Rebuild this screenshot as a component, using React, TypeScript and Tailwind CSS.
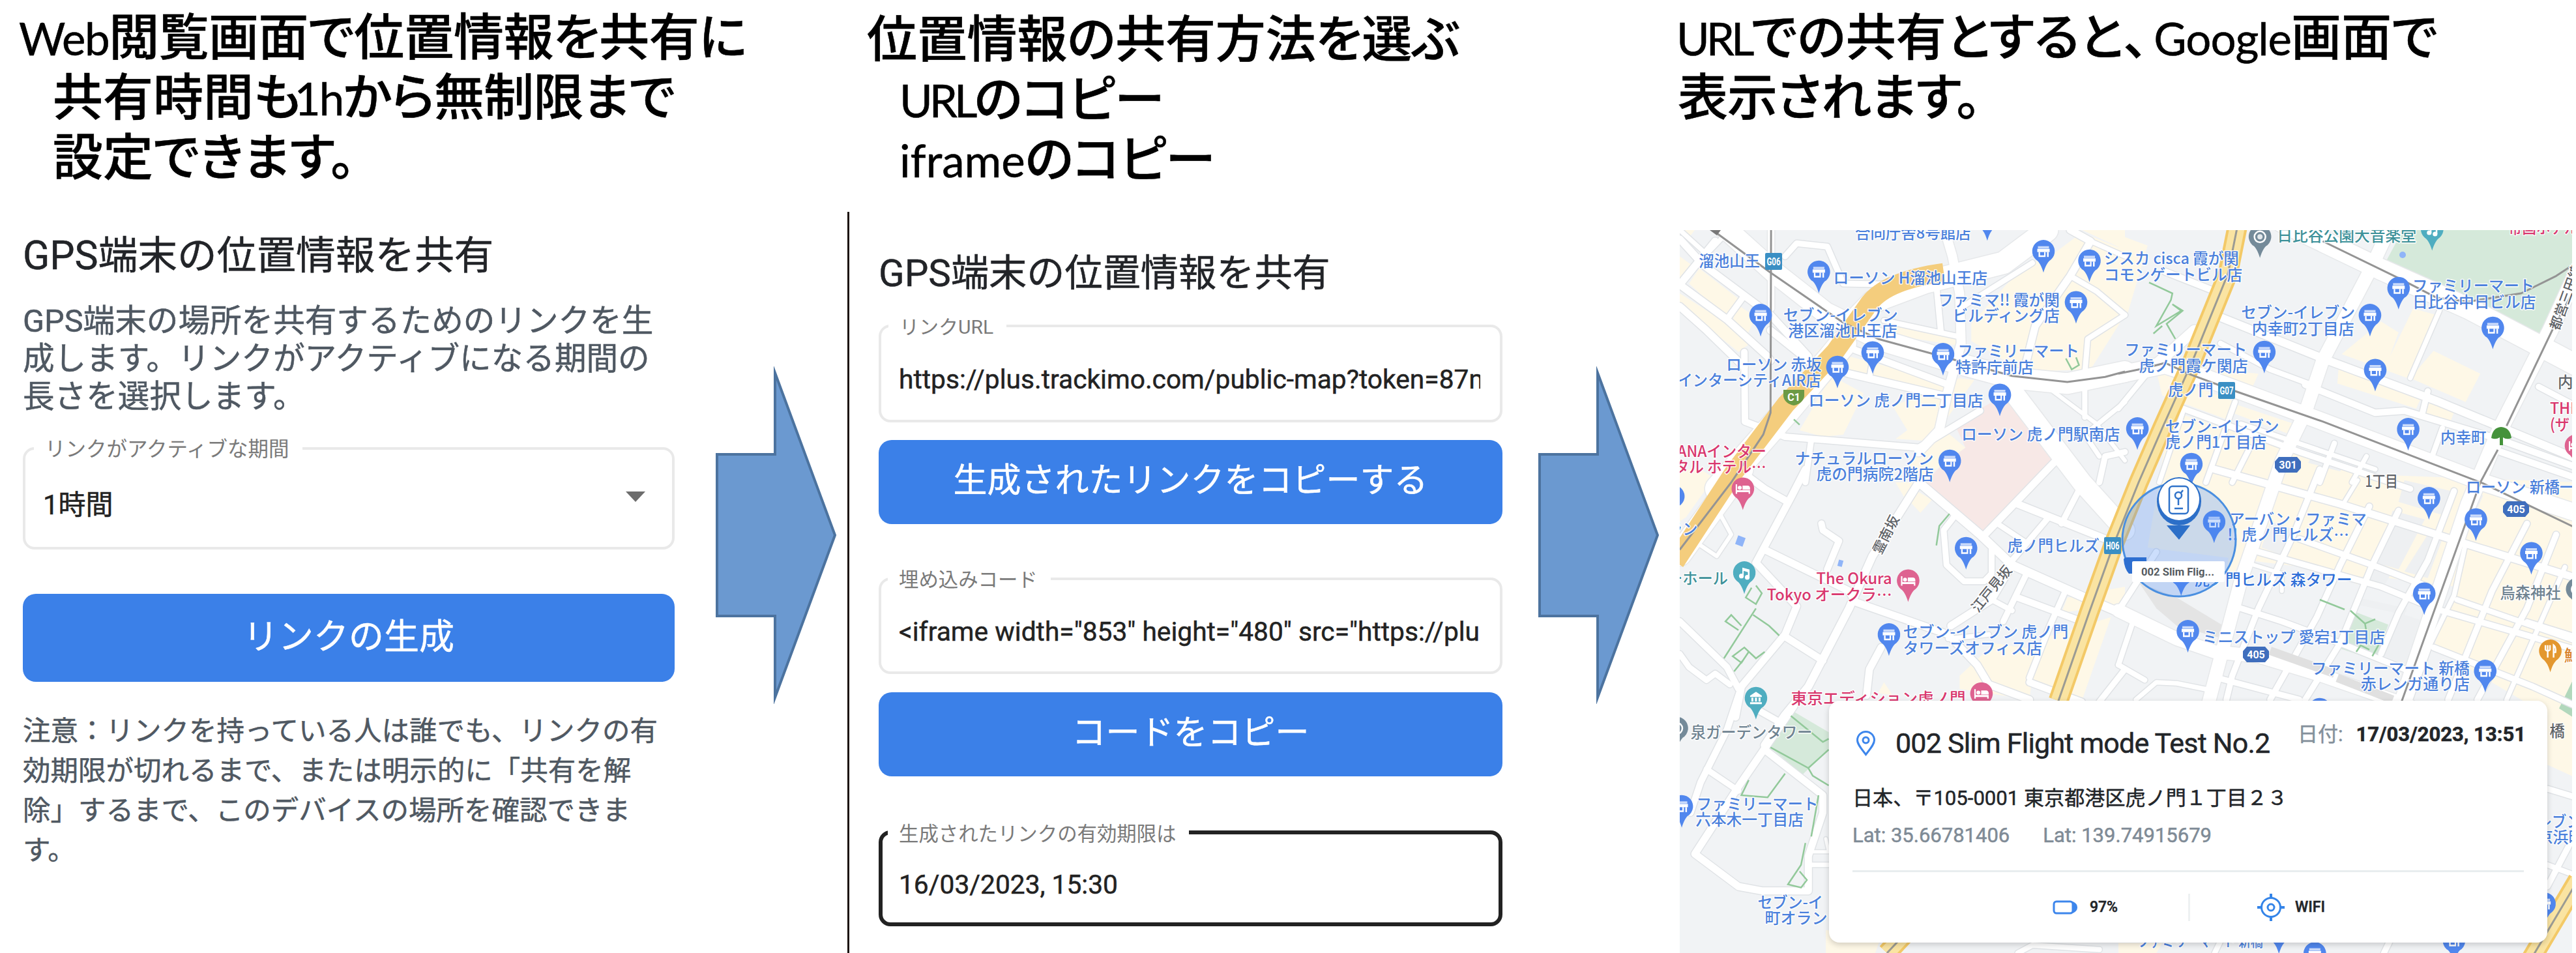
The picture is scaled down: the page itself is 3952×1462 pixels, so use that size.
import type { ReactNode } from "react";

const BLUE = "#4a80dc";
const PINK = "#d9376e";
const TEAL = "#3d9199";
const SLATE = "#6f8391";
const DARK = "#5f6368";

/* ---------- slide text ---------- */

const Latin = ({ children, className = "" }: { children: ReactNode; className?: string }) => (
  <span className={`font-['Lato'] text-[69px] font-normal leading-none ${className}`}>{children}</span>
);

const Line = ({ children, className = "" }: { children: ReactNode; className?: string }) => (
  <div className={`h-[92px] leading-[92px] ${className}`}>{children}</div>
);

const Caption = ({ children, className = "" }: { children: ReactNode; className?: string }) => (
  <h2
    className={`whitespace-nowrap font-['Noto_Sans_CJK_JP',sans-serif] text-[77px] font-medium text-black [font-feature-settings:'palt'] ${className}`}
  >
    {children}
  </h2>
);

const Arrow = () => (
  <svg className="mt-[562px] h-[518px] w-[186px] shrink-0" viewBox="0 0 186 518">
    <path
      d="M2 135H91V10L183 259L91 508V383H2Z"
      fill="#6b99d0"
      stroke="#4c739f"
      strokeWidth="4"
      strokeMiterlimit="10"
    />
  </svg>
);

/* ---------- form pieces ---------- */

const Field = ({
  label,
  className = "",
  labelClass = "",
  children,
}: {
  label: string;
  className?: string;
  labelClass?: string;
  children: ReactNode;
}) => (
  <div className={`relative flex items-center rounded-[18px] pl-[27px] pr-[30px] pt-[20px] ${className}`}>
    <span
      className={`absolute top-[-22px] whitespace-nowrap bg-white pl-[17px] pr-[20px] leading-[44px] text-[#7a7a7a] [-webkit-text-stroke:0px] ${labelClass}`}
    >
      {label}
    </span>
    {children}
  </div>
);

const Button = ({ children, className = "" }: { children: ReactNode; className?: string }) => (
  <button
    className={`flex w-full items-center justify-center rounded-[20px] bg-[#3b80e8] text-white ${className}`}
  >
    {children}
  </button>
);

/* ---------- map ---------- */

type Tile = { ox: number; oy: number; sx: number };
const A: Tile = { ox: 2560, oy: 340, sx: 2.24 };
const B: Tile = { ox: 3250, oy: 340, sx: 2.2336 };
const C: Tile = { ox: 2560, oy: 720, sx: 2.24 };
const D: Tile = { ox: 3250, oy: 720, sx: 2.2336 };
const E: Tile = { ox: 2560, oy: 1060, sx: 2.24 };
const F: Tile = { ox: 3250, oy: 1060, sx: 2.2336 };

const px = (t: Tile, x: number) => t.ox + x / t.sx;
const py = (t: Tile, y: number) => t.oy + y / 3;

// "x,y x,y" in tile units -> the same list in map units
const pts = (t: Tile, s: string) =>
  s
    .split(" ")
    .map((p) => {
      const [x, y] = p.split(",").map(Number);
      return `${px(t, x).toFixed(1)},${py(t, y).toFixed(1)}`;
    })
    .join(" ");

const shops: [Tile, string][] = [
  [A, "38,160 100,220 60,285 38,260"],
  [A, "105,215 245,360 200,445 70,285"],
  [A, "38,330 120,400 295,545 240,600 38,385"],
  [A, "240,385 300,440 270,520 215,470"],
  [A, "38,38 90,38 60,90 38,80"],
  [A, "800,460 990,520 990,570 760,520"],
  [A, "1040,470 1160,290 1240,190 1300,170 1420,50 1568,130 1568,430 1450,680 1220,690 1040,550"],
  [A, "450,960 560,710 670,790 600,980 530,990"],
  [A, "770,850 860,800 1000,720 1050,730 900,1010 780,1000 820,960"],
  [A, "620,620 960,740 940,830 600,690"],
  [A, "940,950 1020,1040 860,1200 820,1130"],
  [A, "1420,38 1568,38 1568,130"],
  [A, "520,590 540,560 490,620"],
  [B, "0,60 100,110 30,430 0,430"],
  [B, "900,460 960,510 930,620 1010,400 1090,430 990,720 765,610"],
  [B, "755,670 1045,790 1020,860 750,745"],
  [B, "1080,595 1240,700 1190,830 1000,720"],
  [B, "1070,815 1155,860 1135,930 1050,890"],
  [B, "130,690 400,830 370,910 150,800"],
  [B, "330,680 480,700 460,760 340,720"],
  [B, "400,840 600,930 590,980 390,880"],
  [B, "180,870 600,1060 1568,1500 1568,1750 100,1500"],
  [C, "38,0 110,0 155,40 60,220 38,240"],
  [C, "840,90 905,140 865,200 830,150"],
  [C, "780,60 850,60 810,130"],
  [C, "1000,950 1120,800 1260,830 1240,1060 1000,1010"],
  [C, "1280,780 1520,680 1420,1065 1250,970"],
  [C, "1370,590 1568,540 1568,620 1350,660"],
  [C, "740,980 770,1040 720,1030"],
  [D, "400,0 1568,60 1568,500 1130,330 620,320 480,380"],
  [D, "1200,340 1568,450 1568,1140 1480,1140 1080,820"],
  [D, "480,410 850,470 820,530 660,440"],
  [D, "380,380 430,380 400,470 370,470"],
  [E, "540,1100 730,1130 710,1206 540,1206"],
  [F, "1470,0 1568,40 1568,400 1470,340"],
  [F, "0,1160 150,1160 130,1206 0,1206"],
];

const grayBlocks: [Tile, string][] = [
  [D, "940,190 1050,230 960,460 880,430"],
  [D, "980,50 1140,100 1110,210 960,150"],
  [D, "520,240 610,280 570,400 490,360"],
  [D, "860,450 930,490 900,560 830,530"],
  [D, "1060,300 1110,320 1060,500 980,470"],
  [D, "960,660 1050,700 990,900 890,850"],
  [D, "820,590 990,640 980,670 810,620"],
  [B, "670,1060 780,1080 760,1150 650,1110"],
  [D, "1190,100 1250,120 1230,180 1180,160"],
];

const minor: [Tile, string, number][] = [
  [A, "38,80 120,200 350,430 480,620", 11],
  [A, "38,290 200,450 340,620 350,640", 11],
  [A, "38,390 130,500 260,670", 11],
  [A, "160,90 38,290", 11],
  [A, "255,350 200,450", 9],
  [A, "38,38 130,150 210,38", 7],
  [A, "400,160 440,100 545,115 600,285 800,290", 9],
  [A, "350,500 480,640 620,700 940,800", 11],
  [A, "640,590 960,750", 10],
  [A, "700,640 690,720", 8],
  [A, "740,455 1000,530", 8],
  [A, "260,600 262,920 400,990 860,1040 1070,870", 10],
  [A, "490,1000 480,1100 470,1200", 9],
  [A, "920,290 935,500", 9],
  [A, "1380,250 1470,320 1568,430", 8],
  [A, "1250,190 1000,400", 8],
  [A, "1380,38 1450,90 1380,250 1260,480 1230,640 1210,720", 11],
  [A, "1568,430 1440,540 1430,700 1430,900", 8],
  [A, "1450,90 1568,160", 7],
  [A, "1280,740 1470,930 1568,1100", 6],
  [A, "1568,830 1430,980 1480,1080", 7],
  [A, "1568,1060 1500,1080 1480,1200", 9],
  [B, "350,440 720,640 1100,830 1568,1090", 12],
  [B, "640,750 880,880 980,870 1300,1000 1568,1130", 10],
  [B, "350,560 520,680 680,760", 8],
  [B, "200,850 620,1060 1000,1230", 9],
  [B, "160,230 330,320", 10],
  [B, "110,680 0,860", 8],
  [B, "1060,780 1040,890", 9],
  [B, "1100,410 1000,720", 7],
  [B, "1110,950 1070,1100", 8],
  [B, "1440,760 1568,850", 9],
  [B, "1310,1060 1568,1180", 10],
  [B, "400,830 300,1200", 8],
  [B, "220,880 140,1200", 7],
  [B, "450,1040 390,1200", 8],
  [B, "740,1020 690,1200", 8],
  [B, "850,1080 800,1200", 7],
  [B, "420,930 880,1140", 7],
  [C, "860,60 700,400 620,640 480,1000 400,1130 330,1270", 12],
  [C, "470,0 420,130 300,430", 11],
  [C, "280,40 330,90 410,150", 11],
  [C, "170,190 215,300 165,400 110,350", 6],
  [C, "860,60 1070,300 1180,440 1430,590 1568,670", 13],
  [C, "330,370 620,560 640,610 960,760 1060,900 1100,990 1240,1060", 11],
  [C, "525,250 530,280 585,330 545,460", 10],
  [C, "300,430 440,630 400,760 250,1000 230,1140", 11],
  [C, "38,700 200,910 240,1010", 10],
  [C, "38,850 70,910 130,970 160,940 210,990", 9],
  [C, "400,770 530,880", 11],
  [C, "730,820 690,920 680,1040", 11],
  [C, "970,720 1110,600 1180,440", 11],
  [C, "980,220 945,280 955,440 1015,515 1085,515 1110,480 1110,370", 9],
  [C, "1080,310 1345,-60", 11],
  [C, "1200,160 1500,320", 11],
  [C, "1130,250 1220,330", 8],
  [C, "1300,230 1180,420", 9],
  [C, "1230,480 1150,700", 9],
  [C, "1200,590 1420,700", 10],
  [C, "1110,600 1180,650", 8],
  [C, "1360,570 1310,720 1240,960", 9],
  [C, "1240,980 1420,1070", 10],
  [C, "1420,70 1350,250", 9],
  [C, "1568,920 1480,1070", 9],
  [C, "960,780 1100,760", 7],
  [D, "330,0 760,160 1160,330 1568,500", 11],
  [D, "480,380 900,540 1080,640 1568,830", 9],
  [D, "620,320 870,440 1060,540", 9],
  [D, "420,640 560,700 760,800 1000,930", 9],
  [D, "1160,600 1568,790", 8],
  [D, "1080,820 1420,1000 1568,1090", 9],
  [D, "1400,700 1568,770", 7],
  [D, "690,0 600,300 480,640 390,950 370,1060", 9],
  [D, "860,170 760,440 680,680 520,1060", 9],
  [D, "960,190 870,440 760,800 640,1060", 9],
  [D, "1150,100 1060,420 960,660 900,850", 9],
  [D, "1190,340 1150,580 1070,800 1000,1060", 7],
  [D, "1400,250 1280,560 1130,1060", 9],
  [D, "1500,300 1400,640 1230,1060", 9],
  [D, "1530,450 1330,1060", 7],
  [D, "820,50 770,160", 6],
  [D, "440,430 560,480 560,560", 6],
  [D, "50,700 0,900", 8],
  [D, "0,900 90,970", 8],
  [D, "340,960 620,1060", 9],
  [D, "60,1060 130,980 200,985 330,1020", 7],
  [D, "130,380 0,650", 9],
  [E, "245,0 200,180 110,420 75,560", 10],
  [E, "430,70 240,440 90,750 240,900 320,920 480,920 480,760 530,560 530,480 330,270", 11],
  [E, "130,360 240,460", 9],
  [E, "310,90 390,150", 10],
  [E, "480,800 550,800", 7],
  [E, "480,740 550,740 540,680", 5],
  [E, "1200,1206 1250,1170 1480,1190", 8],
  [F, "1470,450 1568,490", 9],
  [F, "1568,650 1470,900", 9],
  [F, "1470,800 1568,850", 8],
  [F, "350,1150 330,1206", 8],
  [F, "930,1150 910,1206", 9],
];

const major: [Tile, string, number][] = [
  [A, "170,0 360,230 540,420 740,550 960,640 1180,720 1370,745 1568,690", 32],
  [A, "620,480 700,370 880,280 1150,190 1300,40", 34],
  [A, "940,0 975,160 1000,330 1005,560 960,780 930,960 860,1060", 14],
  [A, "170,1230 400,880 600,560", 40],
  [A, "1170,760 1420,1200 1568,1420", 30],
  [A, "352,38 352,400", 10],
  [B, "560,0 900,220 1200,400 1568,660", 32],
  [B, "940,0 860,230 700,640 640,880 560,1100 420,1650 300,2260", 20],
  [B, "1568,240 1480,500 1310,950 1200,1300 960,2260", 24],
  [B, "0,705 160,660 300,720 700,920 1250,1200 1568,1340", 26],
  [B, "110,680 260,500", 16],
  [D, "0,650 200,780 330,840 480,860 700,950 1000,1090", 20],
  [C, "250,0 38,390", 36],
];

const rails: [Tile, string][] = [
  [A, "352,38 350,880 325,980 270,1090 215,1200 38,1510"],
  [A, "150,38 350,235 600,465 720,540 940,620 1180,710 1370,738 1500,715 1568,690"],
  [B, "0,700 90,675 160,650 240,700 400,780 700,920 1250,1205 1568,1410"],
  [B, "700,90 960,260 1090,350 1200,368 1380,330 1500,250 1568,190"],
  [B, "1555,330 1490,490 1330,940"],
  [B, "1300,1050 1240,1200 970,2210"],
];

const greens: [Tile, string][] = [
  [B, "105,280 185,330 180,360 130,480 215,410 185,380 220,410 165,470 195,540"],
  [B, "120,515 150,480"],
  [C, "300,535 320,570 300,620 265,590 285,545"],
  [C, "300,640 190,870"],
  [C, "240,740 195,700 215,670 250,720"],
  [C, "290,670 345,720 380,765"],
  [C, "330,840 300,870 260,820 220,860 250,890 275,840"],
  [C, "255,880 225,930"],
  [C, "965,205 930,260 920,350"],
  [D, "690,600 775,645"],
  [D, "795,650 845,710 850,750"],
  [D, "845,710 880,690"],
  [D, "815,840 830,810 860,830"],
  [D, "870,860 895,800"],
  [E, "420,115 530,235 550,220"],
  [E, "350,260 480,355 550,270"],
  [E, "480,355 495,390 550,435"],
  [E, "400,380 340,490 250,480 275,410"],
  [E, "515,480 490,670"],
  [E, "470,700 455,800 410,890 455,905 475,870 450,830"],
  [A, "1365,630 1385,680 1410,660 1400,625"],
  [A, "430,910 450,935"],
];

// tile, left, right, middle, text, colour
const labels: [Tile, number, number, number, string, string][] = [
  [A, 108, 318, 180, "溜池山王", BLUE],
  [A, 645, 1043, 52, "合同庁舎8号館店", BLUE],
  [A, 570, 1100, 258, "ローソン H溜池山王店", BLUE],
  [A, 930, 1348, 360, "ファミマ!! 霞が関", BLUE],
  [A, 980, 1348, 432, "ビルディング店", BLUE],
  [A, 398, 792, 428, "セブン-イレブン", BLUE],
  [A, 415, 790, 502, "港区溜池山王店", BLUE],
  [A, 202, 530, 658, "ローソン 赤坂", BLUE],
  [A, 35, 528, 728, "インターシティAIR店", BLUE],
  [A, 998, 1415, 595, "ファミリーマート", BLUE],
  [A, 990, 1258, 670, "特許庁前店", BLUE],
  [A, 485, 1085, 822, "ローソン 虎ノ門二丁目店", BLUE],
  [A, 1010, 1555, 978, "ローソン 虎ノ門駅南店", BLUE],
  [A, 438, 915, 1090, "ナチュラルローソン", BLUE],
  [A, 512, 915, 1162, "虎の門病院2階店", BLUE],
  [A, 1500, 1964, 168, "シスカ cisca 霞が関", BLUE],
  [A, 1500, 1976, 242, "コモンゲートビル店", BLUE],
  [A, 34, 340, 1055, "ANAインター", PINK],
  [A, 24, 340, 1128, "タル ホテル…", PINK],
  [B, 548, 1025, 62, "日比谷公園大音楽堂", TEAL],
  [B, 425, 815, 418, "セブン-イレブン", BLUE],
  [B, 462, 812, 492, "内幸町2丁目店", BLUE],
  [B, 1012, 1430, 295, "ファミリーマート", BLUE],
  [B, 1012, 1435, 368, "日比谷中日ビル店", BLUE],
  [B, 25, 445, 588, "ファミリーマート", BLUE],
  [B, 75, 448, 662, "虎ノ門霞ケ関店", BLUE],
  [B, 175, 330, 775, "虎ノ門", BLUE],
  [B, 165, 555, 942, "セブン-イレブン", BLUE],
  [B, 165, 512, 1015, "虎ノ門1丁目店", BLUE],
  [B, 1108, 1265, 992, "内幸町", BLUE],
  [B, 1510, 1615, 738, "内幸", DARK],
  [B, 1483, 1584, 858, "THE", PINK],
  [B, 1483, 1600, 932, "(ザ・", PINK],
  [B, 1340, 1580, 28, "帝国ホテル", PINK],
  [C, 1168, 1485, 350, "虎ノ門ヒルズ", BLUE],
  [C, 810, 1378, 748, "セブン-イレブン 虎ノ門", BLUE],
  [C, 810, 1288, 822, "タワーズオフィス店", BLUE],
  [C, 512, 772, 500, "The Okura", PINK],
  [C, 342, 772, 575, "Tokyo オークラ…", PINK],
  [C, 0, 208, 500, "ーホール", TEAL],
  [C, 425, 1025, 1052, "東京エディション虎ノ門", PINK],
  [C, 0, 104, 272, "ラン", BLUE],
  [D, 850, 962, 55, "1丁目", DARK],
  [D, 1195, 1568, 80, "ローソン 新橋一", BLUE],
  [D, 385, 855, 228, "アーバン・ファミマ", BLUE],
  [D, 378, 795, 300, "!! 虎ノ門ヒルズ…", BLUE],
  [D, 265, 805, 508, "虎ノ門ヒルズ 森タワー", "#2f6fd8"],
  [D, 292, 918, 770, "ミニストップ 愛宕1丁目店", BLUE],
  [D, 665, 1208, 915, "ファミリーマート 新橋", BLUE],
  [D, 835, 1208, 988, "赤レンガ通り店", BLUE],
  [D, 1312, 1520, 568, "烏森神社", SLATE],
  [D, 1532, 1586, 855, "鮨", "#d9822b"],
  [E, 80, 498, 190, "泉ガーデンタワー", SLATE],
  [E, 100, 518, 520, "ファミリーマート", BLUE],
  [E, 97, 468, 592, "六本木一丁目店", BLUE],
  [E, 310, 535, 972, "セブン-イ", BLUE],
  [E, 335, 550, 1045, "町オラン", BLUE],
  [F, 1482, 1534, 183, "橋", DARK],
  [F, 1440, 1590, 600, "レブン", BLUE],
  [F, 1440, 1600, 672, "京浜町", BLUE],
  [F, 70, 500, 1150, "ファミリーマート 新橋", BLUE],
];

type Kind = "shop" | "hotel" | "music" | "museum" | "dot" | "food";
const pinColor: Record<Kind, string> = {
  shop: "#5187ee",
  hotel: "#de6390",
  music: "#4fadc0",
  museum: "#4fadc0",
  dot: "#748a99",
  food: "#e3972f",
};

const pins: [Tile, number, number, Kind][] = [
  [A, 1095, -10, "shop"],
  [A, 516, 232, "shop"],
  [A, 1288, 137, "shop"],
  [A, 1446, 181, "shop"],
  [A, 1400, 372, "shop"],
  [A, 316, 431, "shop"],
  [A, 701, 603, "shop"],
  [A, 943, 611, "shop"],
  [A, 580, 670, "shop"],
  [A, 1138, 798, "shop"],
  [A, 966, 1102, "shop"],
  [B, 960, 307, "shop"],
  [B, 862, 431, "shop"],
  [B, 500, 601, "shop"],
  [B, 880, 684, "shop"],
  [B, 1283, 490, "shop"],
  [B, 993, 956, "shop"],
  [B, 65, 953, "shop"],
  [B, 250, 1117, "shop"],
  [B, 485, 70, "dot"],
  [B, 1075, 36, "music"],
  [B, 1568, 1032, "hotel"],
  [C, 255, 90, "hotel"],
  [C, 16, 125, "shop"],
  [C, 260, 476, "music"],
  [C, 1022, 364, "shop"],
  [C, 823, 513, "hotel"],
  [C, 757, 761, "shop"],
  [C, 1075, 1033, "hotel"],
  [C, 300, 1054, "museum"],
  [D, 1064, 134, "shop"],
  [D, 1225, 232, "shop"],
  [D, 1415, 387, "shop"],
  [D, 1048, 573, "shop"],
  [D, 238, 746, "shop"],
  [D, 1257, 929, "shop"],
  [D, 328, 242, "shop"],
  [D, 215, 485, "shop"],
  [D, 690, 1105, "shop"],
  [D, 1480, 836, "food"],
  [D, 1572, 552, "dot"],
  [E, 28, 172, "dot"],
  [E, 45, 532, "shop"],
  [F, 1460, 980, "shop"],
  [F, 550, 1112, "shop"],
  [F, 673, 1208, "shop"],
  [F, 1150, 1150, "shop"],
];

const Pin = ({ x, y, kind }: { x: number; y: number; kind: Kind }) => (
  <g transform={`translate(${x} ${y})`}>
    <path
      d="M0 32.500C-2 26-4 20-9 14.500A17.300 17.300 0 1 1 9 14.500C4 20 2 26 0 32.500Z"
      fill={pinColor[kind]}
    />
    {kind === "shop" && (
      <g fill="#fff">
        <path d="M-8.500 -8H8.500V-4.500H-8.500Z" opacity=".7" />
        <path d="M-9.500 -4H9.500V1H-9.500Z" />
        <path d="M-7.500 1H-5.200V6H1V1H3.200V8.500H-7.500Z" />
        <path d="M5.500 1H8V8.500H5.500Z" />
      </g>
    )}
    {kind === "hotel" && (
      <g fill="#fff">
        <path d="M-11 -7H-8.800V2H11V7.500H8.800V5H-8.800V7.500H-11Z" />
        <circle cx="-4.800" cy="-1.800" r="3" />
        <path d="M-.5 -5H7A4 4 0 0 1 11 -1V1.200H-.5Z" />
      </g>
    )}
    {kind === "music" && (
      <g fill="#fff">
        <circle cx="-4.500" cy="5" r="3.600" />
        <circle cx="4.500" cy="7" r="3.600" />
        <path d="M-3 -8L8 -5V7H5.500V-1L-1 -3V5H-3Z" />
      </g>
    )}
    {kind === "museum" && (
      <g fill="#fff">
        <path d="M0 -10L9 -4V-2H-9V-4Z" />
        <path d="M-7 -1H-4V5H-7ZM-1.500 -1H1.500V5H-1.500ZM4 -1H7V5H4ZM-9 6H9V9H-9Z" />
      </g>
    )}
    {kind === "dot" && (
      <g>
        <circle r="8.500" fill="none" stroke="#fff" strokeWidth="2.500" />
        <circle r="4" fill="#fff" opacity=".8" />
      </g>
    )}
    {kind === "food" && (
      <g fill="none" stroke="#fff" strokeWidth="2.400">
        <path d="M-4 10V-9M-7.500 -9V-2Q-4 2 -.5 -2V-9M5 10V-9Q9 -6 8 2H5" />
      </g>
    )}
  </g>
);

const Metro = ({ x, y, text }: { x: number; y: number; text: string }) => (
  <g transform={`translate(${x} ${y})`}>
    <rect x="-13" y="-13" width="26" height="26" rx="2" fill="#3a8fc4" />
    <text y="6" textAnchor="middle" fill="#fff" className="font-['Roboto'] text-[16px] font-bold" textLength="21" lengthAdjust="spacingAndGlyphs">
      {text}
    </text>
  </g>
);

const Route = ({ x, y, text }: { x: number; y: number; text: string }) => (
  <g transform={`translate(${x} ${y})`}>
    <path d="M-14 -12H14L20 -5V5L14 12H-14L-20 5V-5Z" fill="#3f6ebd" />
    <text y="6" textAnchor="middle" fill="#fff" className="font-['Roboto'] text-[16px] font-bold">
      {text}
    </text>
  </g>
);

const RoadName = ({ x, y, turn, text }: { x: number; y: number; turn: number; text: string }) => (
  <text
    transform={`translate(${x} ${y}) rotate(${turn})`}
    y="8"
    textAnchor="middle"
    fill={DARK}
    stroke="#fff"
    strokeWidth="3"
    paintOrder="stroke"
    className="font-['Noto_Sans_CJK_JP',sans-serif] text-[21px] font-medium"
  >
    {text}
  </text>
);

const Lines = ({ data, stroke, extra = 0 }: { data: [Tile, string, number][]; stroke: string; extra?: number }) => (
  <g fill="none" stroke={stroke} strokeLinejoin="round" strokeLinecap="round">
    {data.map(([t, s, w], i) => (
      <polyline key={i} points={pts(t, s)} strokeWidth={w + extra} />
    ))}
  </g>
);

const trunk = "M3434 340L3418 420L3364 553L3318 655L3281 740L3242 837L3205 940L3158 1075";

const MapCanvas = () => (
  <svg className="block h-[1109px] w-[1369px] bg-[#f1f3f5]" viewBox="2577 353 1369 1109">
    <g fill="#fef8e7">
      {shops.map(([t, s], i) => (
        <polygon key={i} points={pts(t, s)} />
      ))}
    </g>
    <g fill="#eef0f2">
      {grayBlocks.map(([t, s], i) => (
        <polygon key={i} points={pts(t, s)} />
      ))}
    </g>
    <polygon
      fill="#f7e8e6"
      points={pts(A, "1060,870 1150,800 1240,930 1345,1080 1078,1440 880,1200 940,1120 1020,1040 985,940")}
    />
    <g fill="#d5e9da">
      <polygon points={pts(B, "918,180 975,38 1568,38 1568,210 1430,545 1250,425")} />
      <polygon points={pts(E, "430,95 550,190 550,270 460,385 345,255")} />
      <polygon points={pts(D, "800,650 925,715 880,880 750,820")} />
      <polygon points={pts(D, "1568,940 1568,1150 1510,1100")} fill="#b2d8bc" />
    </g>
    <polygon fill="#e4e4e4" points={pts(D, "70,520 200,590 360,720 360,780 200,720 130,640")} />

    <Lines data={minor} stroke="#e0e3e6" extra={3} />
    <Lines data={major} stroke="#e6e8ea" extra={3} />
    <Lines data={minor} stroke="#fff" />
    <Lines data={major} stroke="#fff" />
    <g stroke="#e0e0e0" fill="none" strokeWidth="13">
      <polyline points={pts(D, "520,835 740,940")} />
      <polyline points={pts(D, "750,960 940,1060")} />
    </g>

    {/* expressway and trunk road */}
    <g fill="none">
      <path d="M2570 862L2660 725L2740 620L2815 540L2868 465Q2895 430 2982 418" stroke="#f4cd7d" strokeWidth="29" />
      <path d={trunk} stroke="#f3c967" strokeWidth="31" />
      <path d={trunk} stroke="#fae4a2" strokeWidth="23" />
      <path d="M2895 1462L2925 1430M3872 1490L3955 1350" stroke="#f3c967" strokeWidth="31" />
      <path d="M2895 1462L2925 1430M3872 1490L3955 1350" stroke="#fae4a2" strokeWidth="23" />
      <path d={trunk} stroke="#9b9b93" strokeWidth="3" />
      <path d="M2895 1462L2925 1430M3872 1490L3955 1350" stroke="#9b9b93" strokeWidth="3" />
    </g>
    <g fill="none" stroke="#949494" strokeWidth="3" strokeLinejoin="round">
      {rails.map(([t, s], i) => (
        <polyline key={i} points={pts(t, s)} />
      ))}
    </g>
    <path d="M2623 353H2640L2634 361Z" fill="#777" />
    <g fill="none" stroke="#92c99a" strokeWidth="2.500">
      {greens.map(([t, s], i) => (
        <polyline key={i} points={pts(t, s)} />
      ))}
    </g>
    <g fill="#8fb4f8">
      <rect x="2664" y="823" width="12" height="14" transform="rotate(20 2670 830)" />
      <rect x="2820" y="859" width="7" height="10" transform="rotate(15 2823 864)" />
      <circle cx="3686" cy="391" r="5" />
    </g>

    <g
      stroke="#fff"
      strokeWidth="3"
      strokeLinejoin="round"
      strokeOpacity=".85"
      paintOrder="stroke"
      className="font-['Noto_Sans_CJK_JP',sans-serif] text-[24px] font-medium"
    >
      {labels.map(([t, l, r, mid, text, fill], i) => (
        <text
          key={i}
          x={px(t, l) - 2}
          y={py(t, mid) + 9}
          fill={fill}
          textLength={(r - l) / t.sx}
          lengthAdjust="spacingAndGlyphs"
        >
          {text}
        </text>
      ))}
    </g>
    <RoadName x={2893} y={820} turn={-63} text="霊南坂" />
    <RoadName x={3055} y={903} turn={-51} text="江戸見坂" />
    <RoadName x={3936} y={456} turn={-70} text="都営三田線" />

    {pins.map(([t, x, y, kind], i) => (
      <Pin key={i} x={px(t, x)} y={py(t, y)} kind={kind} />
    ))}
    <Metro x={2721} y={401} text="G06" />
    <Metro x={3416} y={599} text="G07" />
    <Metro x={3241} y={837} text="H06" />
    <Route x={3510} y={713} text="301" />
    <Route x={3860} y={781} text="405" />
    <Route x={3461} y={1004} text="405" />
    <path d="M2736 598H2768V608Q2766 619 2752 622Q2738 619 2736 608Z" fill="#6b9a45" />
    <text x="2752" y="615" textAnchor="middle" fill="#fff" className="font-['Roboto'] text-[16px] font-bold">
      C1
    </text>
    <path d="M3822 672Q3824 656 3837 655Q3851 656 3853 672Q3845 675 3840 671V683H3835V671Q3829 675 3822 672Z" fill="#45923b" />

    {/* device position */}
    <circle cx="3343" cy="828" r="87" fill="#4285f4" fillOpacity=".27" stroke="#4a8fe0" strokeWidth="3" />
    <path d="M3258 858Q3259 855 3264 855H3293V862H3272V880H3266Q3259 872 3258 858Z" fill="#2e6fd0" />
    <path d="M3324 806H3360L3343 828Z" fill="#2c6fc8" />
    <ellipse cx="3343" cy="769" rx="34" ry="37" fill="#2c6fc8" />
    <ellipse cx="3343" cy="766" rx="31" ry="32" fill="#fff" />
    <g fill="none" stroke="#2f72c9" strokeWidth="2.500">
      <rect x="3328" y="746" width="29" height="42" rx="5" />
      <circle cx="3342" cy="760" r="5" />
      <path d="M3342 765V775M3346 756L3349 752M3336 780H3349" />
    </g>
    <rect x="3271" y="861" width="142" height="32" rx="2" fill="#fff" />
    <text x="3285" y="883" textLength="112" lengthAdjust="spacingAndGlyphs" fill="#555b60" className="font-['Roboto'] text-[17px] font-bold">
      002 Slim Flig...
    </text>
  </svg>
);

const InfoCard = () => (
  <div className="absolute left-[229px] top-[722px] h-[371px] w-[1102px] rounded-[16px] bg-white px-[36px] text-[#222529] shadow-[0_3px_10px_rgba(0,0,0,0.18)]">
    <div className="flex h-[112px] items-start">
      <svg className="ml-[5px] mt-[46px] h-[39px] w-[31px] shrink-0" viewBox="0 0 31 39" fill="none" stroke="#3d86ec" strokeWidth="3">
        <path d="M15.500 36.500C9 28 2.500 21 2.500 14.500A13 13 0 0 1 28.500 14.500C28.500 21 22 28 15.500 36.500Z" />
        <circle cx="15.500" cy="14.500" r="4.500" />
      </svg>
      <span className="ml-[30px] mt-[39px] whitespace-nowrap text-[43px] leading-[52px] tracking-[-0.8px]">002 Slim Flight mode Test No.2</span>
      <span className="ml-auto mt-[32px] whitespace-nowrap text-[31px] leading-[40px] text-[#84909b]">日付:</span>
      <span className="ml-[20px] mr-[-3px] mt-[32px] whitespace-nowrap text-[31px] font-bold leading-[40px]">17/03/2023, 13:51</span>
    </div>
    <div className="pt-[18px] text-[31.100px] leading-[40px]">日本、〒105-0001 東京都港区虎ノ門１丁目２３</div>
    <div className="mt-[17px] flex gap-[51px] text-[31px] leading-[40px] text-[#7f8b96]">
      <span>Lat: 35.66781406</span>
      <span>Lat: 139.74915679</span>
    </div>
    <div className="mt-[33px] h-[3px] w-full bg-[#e8edef]" />
    <div className="flex h-[108px] items-center text-[23px] font-medium">
      <div className="flex w-[515px] items-center justify-end pr-[108px]">
        <svg className="mr-[18px] h-[22px] w-[39px]" viewBox="0 0 39 22">
          <rect x="2" y="2" width="29" height="18" rx="4" fill="none" stroke="#3d86ec" strokeWidth="3" />
          <path d="M31 2Q38 5 38 11Q38 17 31 20Z" fill="#3d86ec" />
        </svg>
        97%
      </div>
      <div className="h-[42px] w-[3px] bg-[#eef1f2]" />
      <svg className="ml-[103px] mr-[16px] h-[42px] w-[42px]" viewBox="0 0 42 42" fill="none" stroke="#3484e8" strokeWidth="3">
        <circle cx="21" cy="21" r="14.500" />
        <circle cx="21" cy="21" r="5" />
        <path d="M21 0V8M21 34V42M0 21H8M34 21H42" strokeWidth="4" />
      </svg>
      WIFI
    </div>
  </div>
);

/* ---------- page ---------- */

const App = () => {
  return (
    <div className="flex h-[1462px] w-[3952px] overflow-hidden bg-white font-['Roboto','Noto_Sans_CJK_JP',sans-serif] [-webkit-text-stroke:0.5px]">
      {/* Step 1: create the link */}
      <section className="w-[1098px] shrink-0 pl-[35px] pt-[6px]">
        <Caption className="h-[276px]">
          <Line className="-ml-[6px]">
            <Latin className="tracking-[-1.5px]">Web</Latin>
            <span className="tracking-[-0.6px]">閲覧画面で位置情報を共有に</span>
          </Line>
          <Line className="pl-[46px]">
            共有時間<span className="tracking-[-10px]">も</span>
            <Latin className="tracking-[-2px]">1h</Latin>
            <span className="tracking-[-0.8px]">から無制限まで</span>
          </Line>
          <Line className="pl-[46px]">設定できます。</Line>
        </Caption>
        <h3 className="mt-[81px] whitespace-nowrap text-[60.700px] leading-[60px] text-[#222428]">GPS端末の位置情報を共有</h3>
        <p className="mt-[41px] whitespace-nowrap text-[48.600px] leading-[58px] text-[#4f5862]">
          GPS端末の場所を共有するためのリンクを生
          <br />
          成します。リンクがアクティブになる期間の
          <br />
          長さを選択します。
        </p>
        <Field
          label="リンクがアクティブな期間"
          labelClass="left-[13px] text-[31.500px]"
          className="mt-[48px] h-[157px] w-[1000px] border-4 border-[#e9e9e9]"
        >
          <span className="text-[42px] text-[#222]">1時間</span>
          <span className="ml-auto mr-[11px] mt-[-26px] h-0 w-0 border-x-[15px] border-t-[16px] border-x-transparent border-t-[#6d6d6d]" />
        </Field>
        <Button className="mt-[68px] h-[135px] max-w-[1000px] pb-[3px] text-[54px]">リンクの生成</Button>
        <p className="mt-[45px] whitespace-nowrap text-[42.500px] leading-[61px] text-[#4f5862]">
          注意：リンクを持っている人は誰でも、リンクの有
          <br />
          効期限が切れるまで、または明示的に「共有を解
          <br />
          除」するまで、このデバイスの場所を確認できま
          <br />
          す。
        </p>
      </section>

      <Arrow />

      {/* Step 2: choose how to share */}
      <section className="ml-[16px] flex w-[1060px] shrink-0 flex-col">
        <Caption className="h-[325px] shrink-0 pl-[34px] pt-[9px]">
          <Line className="-ml-[4px] tracking-[-0.2px]">位置情報の共有方法を選ぶ</Line>
          <Line className="pl-[46px]">
            <Latin className="tracking-[-5px]">URL</Latin>
            <span className="tracking-[-1px]">のコピー</span>
          </Line>
          <Line className="pl-[46px]">
            <Latin>iframe</Latin>
            <span className="tracking-[-1px]">のコピー</span>
          </Line>
        </Caption>
        <div className="flex-1 border-l-[3px] border-[#1c120c] pl-[45px] pt-[65px]">
          <div className="w-[957px]">
            <h3 className="whitespace-nowrap text-[58.200px] leading-[58px] text-[#222428]">GPS端末の位置情報を共有</h3>
            <Field label="リンクURL" labelClass="left-[11px] text-[30px]" className="mt-[50px] h-[150px] border-4 border-[#e9e9e9]">
              <span className="w-[896px] overflow-hidden whitespace-nowrap text-[40.700px] text-[#222]">
                https://plus.trackimo.com/public-map?token=87m
              </span>
            </Field>
            <Button className="mt-[27px] h-[129px] pb-[3px] text-[52px]">生成されたリンクをコピーする</Button>
            <Field label="埋め込みコード" labelClass="left-[10px] text-[30.400px]" className="mt-[82px] h-[148px] border-4 border-[#e9e9e9]">
              <span className="w-[896px] overflow-hidden whitespace-nowrap text-[40.700px] text-[#222]">
                {'<iframe width="853" height="480" src="https://plus.'}
              </span>
            </Field>
            <Button className="mt-[28px] h-[129px] pb-[3px] text-[52px]">コードをコピー</Button>
            <Field
              label="生成されたリンクの有効期限は"
              labelClass="left-[8px] text-[30.400px]"
              className="mt-[83px] h-[147px] border-[6px] border-[#222]"
            >
              <span className="-ml-[2px] text-[40.700px] text-[#222]">16/03/2023, 15:30</span>
            </Field>
          </div>
        </div>
      </section>

      <Arrow />

      {/* Step 3: the shared map */}
      <section className="ml-[31px] w-[1369px] shrink-0">
        <Caption className="h-[353px] pt-[6px]">
          <Line className="-ml-[5px]">
            <Latin className="tracking-[-5px]">URL</Latin>での共有とすると
            <span className="tracking-[8px]">、</span>
            <Latin className="tracking-[-1px]">Google</Latin>画面で
          </Line>
          <Line className="-ml-[3px] tracking-[-1px]">表示されます。</Line>
        </Caption>
        <div className="relative h-[1109px] overflow-hidden">
          <MapCanvas />
          <InfoCard />
        </div>
      </section>
    </div>
  );
};

export default App;
